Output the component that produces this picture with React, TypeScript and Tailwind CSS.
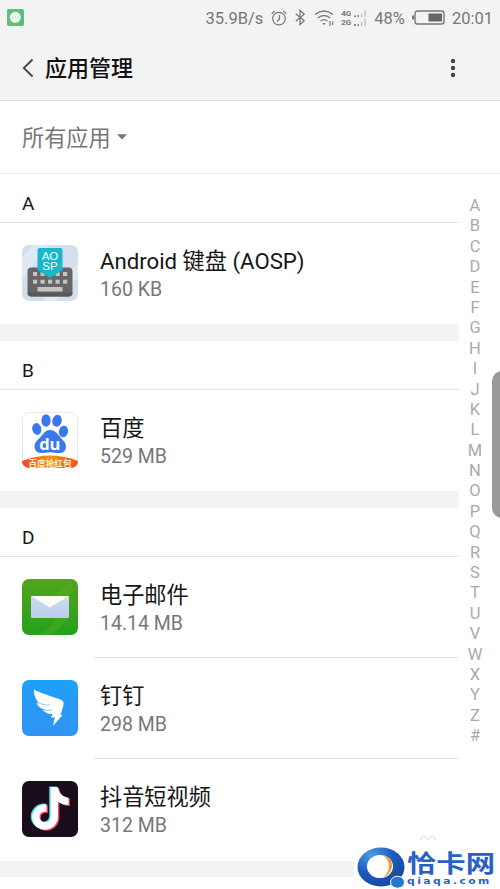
import type { ReactNode } from "react";

type AppItem = {
  name: string;
  size: string;
  icon: ReactNode;
};

const letters = "ABCDEFGHIJKLMNOPQRSTUVWXYZ#".split("");

function KeyboardIcon() {
  return (
    <svg viewBox="0 0 56 56" className="size-14">
      <rect width="56" height="56" rx="7" fill="#d3dfee" />
      <path d="M0 12 12 0h16L0 34ZM20 56 56 18v14L34 56Z" fill="#dfe8f4" />
      <rect x="5.5" y="22.5" width="45" height="29" rx="4" fill="#666" />
      <path d="M5.5 47.5q0 4 4 4h37q4 0 4-4" fill="#585858" />
      {[0, 1, 2, 3, 4].map((i) => (
        <g key={i} fill="#c4c4c4">
          <rect x={11 + i * 7.5} y="27" width="4.2" height="4" />
          <rect x={11 + i * 7.5} y="34.7" width="4.2" height="4" />
        </g>
      ))}
      <rect x="15.500" y="42" width="25" height="4.500" fill="#c4c4c4" />
      <path d="M17.500 3h21q2 0 2 2v20L28.300 33 15.500 25V5q0-2 2-2Z" fill="#18b8ca" />
      <g
        fill="#fff"
        fontFamily="Liberation Sans, sans-serif"
        fontSize="11.5"
        textAnchor="middle"
      >
        <text x="28" y="14.500">AO</text>
        <text x="28" y="25">SP</text>
      </g>
    </svg>
  );
}

function BaiduIcon() {
  return (
    <svg viewBox="0 0 56 56" className="size-14">
      <defs>
        <linearGradient id="ribbon">
          <stop offset="0" stopColor="#f0481c" />
          <stop offset=".5" stopColor="#f5911c" />
          <stop offset="1" stopColor="#f0501c" />
        </linearGradient>
        <clipPath id="baidu-clip">
          <rect width="56" height="56" rx="7" />
        </clipPath>
      </defs>
      <rect x=".5" y=".5" width="55" height="55" rx="7" fill="#fff" stroke="#e9e9e9" />
      <g fill="#3b78ee">
        <ellipse cx="14.800" cy="17" rx="4.500" ry="6" transform="rotate(-12 14.800 17)" />
        <ellipse cx="24" cy="8.500" rx="4.600" ry="6.200" />
        <ellipse cx="35" cy="8.800" rx="4.700" ry="6" transform="rotate(14 35 8.800)" />
        <ellipse cx="41.500" cy="19.500" rx="4.600" ry="5.800" transform="rotate(10 41.500 19.500)" />
        <path d="M28 18c-4.500 0-6.500 3.500-9 6.500-2.800 3.300-6.500 5.500-6.500 10 0 4 2.800 6.500 6.500 6.500 3.500 0 5.500-.8 9-.8s6 .8 9.500.8c4 0 6.500-2.500 6.500-6.500 0-4.500-3.500-6.500-6.200-10C35 21 32.500 18 28 18Z" />
      </g>
      <text
        x="27.800"
        y="37.500"
        fill="#fff"
        fontFamily="Open Sans, sans-serif"
        fontSize="16.500"
        fontWeight="700"
        textAnchor="middle"
      >
        du
      </text>
      <g clipPath="url(#baidu-clip)">
        <path d="M0 49Q28 38 56 49v7H0Z" fill="url(#ribbon)" />
        <text
          x="28"
          y="54.500"
          fill="#fff3d0"
          fontFamily="Noto Sans CJK SC, sans-serif"
          fontSize="8.600"
          fontWeight="700"
          textAnchor="middle"
        >
          百度抢红包
        </text>
      </g>
    </svg>
  );
}

function MailIcon() {
  return (
    <svg viewBox="0 0 56 56" className="size-14">
      <defs>
        <linearGradient id="mail-bg" x2="0" y2="1">
          <stop offset="0" stopColor="#54a31d" />
          <stop offset="1" stopColor="#25a11a" />
        </linearGradient>
        <linearGradient id="mail-body" x2="0" y2="1">
          <stop offset="0" stopColor="#cddaf0" />
          <stop offset="1" stopColor="#bccdec" />
        </linearGradient>
      </defs>
      <rect width="56" height="56" rx="7" fill="url(#mail-bg)" />
      <path d="M47 17Q52 9 50 3L47 4Q39 12 28 17ZM47 39 30 56H16Q27 50 36 39Z" fill="#5bb32c" opacity=".35" />
      <rect x="9" y="17" width="38" height="22" rx="1" fill="url(#mail-body)" />
      <path d="M9 17h38L28 28.500Z" fill="#fafcf0" />
    </svg>
  );
}

function DingTalkIcon() {
  return (
    <svg viewBox="0 0 56 56" className="size-14">
      <defs>
        <linearGradient id="ding-bg" x2="0" y2="1">
          <stop offset="0" stopColor="#1da1f8" />
          <stop offset="1" stopColor="#3293f4" />
        </linearGradient>
      </defs>
      <rect width="56" height="56" rx="7" fill="url(#ding-bg)" />
      <path
        d="M12 9.500c5 3 15 6 25 9.500 3.500 1.200 5.300 2.700 4.500 6-.8 3-1.800 6.500-3 10h2L31 46l1.800-8.500H29l1.500-3.500c-4 .3-7.800-1.200-9.900-4.200 1 .3 2.500.3 3.700.1-4.800-.6-8.300-3-9.800-7.100 1 .5 2 .8 3 .9C14 20 11.500 15 12 9.500Z"
        fill="#fff"
      />
      <path d="M17 23c3.500 1.700 7.500 2.300 11 1.800M22 30c3 .8 6 .6 8.500-.2" fill="none" stroke="#2a9bf7" strokeWidth=".5" />
    </svg>
  );
}

const notePath =
  "M28 6h7.500c.5 6 4.500 10 10.500 10.500v7.300c-4 0-7.500-1.300-10.500-3.300V35c0 8-6 13.500-13 13.500S9.500 43 9.500 36s6-13.500 14.500-13v7.800c-4-.8-7 1.500-7 5 0 3.200 2.500 5.200 5.500 5.200s5.500-2.300 5.500-6Z";

function DouyinIcon() {
  return (
    <svg viewBox="0 0 56 56" className="size-14">
      <rect width="56" height="56" rx="7" fill="#190d1c" />
      <path d={notePath} fill="#ef3b58" transform="translate(1.900 1.200)" />
      <path d={notePath} fill="#45ddda" transform="translate(-.8 -.4)" />
      <path d={notePath} fill="#fff" transform="translate(.6 .2)" />
    </svg>
  );
}

const sections: { letter: string; items: AppItem[] }[] = [
  {
    letter: "A",
    items: [{ name: "Android 键盘 (AOSP)", size: "160 KB", icon: <KeyboardIcon /> }],
  },
  {
    letter: "B",
    items: [{ name: "百度", size: "529 MB", icon: <BaiduIcon /> }],
  },
  {
    letter: "D",
    items: [
      { name: "电子邮件", size: "14.14 MB", icon: <MailIcon /> },
      { name: "钉钉", size: "298 MB", icon: <DingTalkIcon /> },
      { name: "抖音短视频", size: "312 MB", icon: <DouyinIcon /> },
    ],
  },
];

function StatusBar() {
  return (
    <div className="flex h-9 items-center pl-[7px] pr-[7px] pt-[2px] text-[16.5px] text-[#777]">
      <svg viewBox="0 0 17 17" className="mb-[3px] size-[17px]">
        <rect width="17" height="17" rx="2" fill="#5dbd7c" />
        <circle cx="8.300" cy="8.300" r="5.500" fill="#eafaf0" />
        <path d="M5.500 8.300h1m1.200 0h1m1.200 0h1" stroke="#8ccfa3" />
      </svg>
      <span className="ml-auto">35.9B/s</span>

      <svg viewBox="0 0 16 16" className="mb-[3px] ml-[8px] size-4" fill="none" stroke="currentColor" strokeWidth="1.200">
        <circle cx="8" cy="8.600" r="6.300" />
        <path d="M8.500 4.800v4.200L6 11.500M.7 3.700 3.700 1M12.300 1l3 2.700" />
      </svg>
      <svg viewBox="0 0 12 18" className="mb-[3px] ml-[7px] h-[17px] w-3" fill="none" stroke="currentColor" strokeWidth="1.300">
        <path d="m1.500 5 9 7.500L6 16.500v-15l4.500 4-9 7.500" />
      </svg>
      <svg viewBox="0 0 22 18" className="mb-[3px] ml-[8px] h-[18px] w-[22px]" fill="none" stroke="currentColor" strokeWidth="1.400">
        <path d="M1 5.500q9-7 18 0M3.800 9q6.200-5 12.400 0M6.500 12q3.500-2.800 7 0" />
        <path d="M8.300 14h3.400L10 16.300Z" fill="currentColor" stroke="none" />
        <path d="M16 12v5M18.700 12.500v3.500" strokeWidth="1.200" />
      </svg>
      <div className="mb-[3px] ml-[5px] flex w-[11px] flex-col text-[8px] font-bold leading-[9px]">
        <span>4G</span>
        <span>2G</span>
      </div>
      <svg viewBox="0 0 14 18" className="mb-[3px] ml-px h-[18px] w-[14px]">
        <path d="M1 6.500h2v1.500H1ZM4.500 6h1.500v2H4.500ZM1 15h2v2H1ZM4.500 15h1.500v2H4.500Z" fill="#888" />
        <path d="M8 4.500h1.200V8H8ZM11.500 1h1.200v7h-1.200ZM8 13h1.200v4H8ZM11.500 9.500h1.200V17h-1.200Z" fill="#bbb" />
      </svg>
      <span className="ml-[7px]">48%</span>
      <svg viewBox="0 0 33 15" className="mb-[3px] ml-[7px] h-[15px] w-[33px]">
        <rect x="3" y="1" width="29" height="13" rx="2.500" fill="none" stroke="#777" strokeWidth="1.400" />
        <path d="M0 5.500h2v4H0Z" fill="#777" />
        <path d="M16.500 3.500H30v8H16.500Z" fill="#666" />
      </svg>
      <span className="ml-[7px]">20:01</span>
    </div>
  );
}

function AppRow({ item, last }: { item: AppItem; last: boolean }) {
  return (
    <div className="flex h-[101.2px] pl-[22px]">
      <div className="mt-[22px] size-14 shrink-0">{item.icon}</div>
      <div className={`ml-4 flex-1 pl-[6px] pt-[23px] ${last ? "" : "border-b border-[#e3e3e3]"}`}>
        <div className="h-[31px] whitespace-nowrap text-[22.2px] leading-[31px] text-[#161616]">{item.name}</div>
        <div className="text-[19.5px] leading-[26px] text-[#777]">{item.size}</div>
      </div>
    </div>
  );
}

function Watermark() {
  return (
    <div className="absolute bottom-0 right-0 flex h-[43px] w-[146px] items-start bg-white">
      <svg viewBox="0 0 50 42" className="ml-[3px] mt-px h-[42px] w-[50px] shrink-0">
        <defs>
          <radialGradient id="brand" cx=".3" cy=".2" r=".9">
            <stop offset="0" stopColor="#4b9be8" />
            <stop offset=".5" stopColor="#1e5cbc" />
            <stop offset="1" stopColor="#1543a0" />
          </radialGradient>
        </defs>
        <ellipse cx="24" cy="20" rx="23.500" ry="19.500" fill="url(#brand)" />
        <ellipse cx="23" cy="19.500" rx="13" ry="11.500" fill="#fff" />
        <path d="M25 8q11 3 10 12-2 8-9 10 6-4 6-11 0-7-7-11Z" fill="#f29a21" />
        <ellipse cx="40.500" cy="35.200" rx="7" ry="6" fill="#227ad0" stroke="#fff" />
      </svg>
      <div className="flex flex-1 flex-col text-[#2a5fc6]">
        <div className="mt-[3px] h-[27px] w-[72px] origin-left scale-x-[1.25] whitespace-nowrap font-['Noto_Sans_CJK_SC',sans-serif] text-[23.5px] font-bold leading-[26px]">
          恰卡网
        </div>
        <div className="h-[11px] origin-left scale-x-[1.35] whitespace-nowrap font-['DejaVu_Sans',sans-serif] text-[8px] font-bold leading-[11px] tracking-[1.8px]">
          qiaqa.com
        </div>
      </div>
    </div>
  );
}

export default function App() {
  return (
    <div className="relative h-[889px] w-[500px] overflow-hidden bg-white font-[Roboto,'Noto_Sans_CJK_SC',sans-serif]">
      <header className="h-[101px] border-b border-[#dcdcdc] bg-[#f3f3f3]">
        <StatusBar />
        <div className="flex h-16 items-center pl-[22px] pr-[44px]">
          <svg viewBox="0 0 12 20" className="h-5 w-3" fill="none" stroke="#444" strokeWidth="1.800">
            <path d="M10.500 1.500 1.800 10l8.700 8.500" />
          </svg>
          <h1 className="ml-[11px] text-[22px] font-medium text-[#111]">应用管理</h1>
          <svg viewBox="0 0 6 20" className="ml-auto h-5 w-[6px]" fill="#444">
            <circle cx="3" cy="3" r="2.200" />
            <circle cx="3" cy="10" r="2.200" />
            <circle cx="3" cy="17" r="2.200" />
          </svg>
        </div>
      </header>

      <div className="flex h-[73px] items-center border-b border-[#ececec] pl-[22px] text-[22.2px] text-[#777]">
        <span className="pt-[3px]">所有应用</span>
        <svg viewBox="0 0 10 6" className="ml-[6px] h-[6px] w-[10px]">
          <path d="M0 .3h10L5 5.500Z" fill="#777" />
        </svg>
      </div>

      <div className="flex">
        <main className="w-[459px] shrink-0">
          {sections.map((section) => (
            <section key={section.letter}>
              <h2 className="flex h-[49.3px] items-center border-b border-[#e3e3e3] pl-[22px] pt-[12px] text-[19px] text-[#161616]">
                {section.letter}
              </h2>
              {section.items.map((item, i) => (
                <AppRow key={item.name} item={item} last={i === section.items.length - 1} />
              ))}
              <div className="h-[16.4px] bg-[#f3f3f3]" />
            </section>
          ))}
        </main>
        <nav className="flex w-8 flex-col items-center pt-[22px] text-[16.5px] text-[#aaa]">
          {letters.map((letter) => (
            <span key={letter} className="h-[20.4px] leading-[20.4px]">
              {letter}
            </span>
          ))}
        </nav>
      </div>

      <div className="absolute -right-3 top-[371px] h-[147px] w-5 rounded-[10px] bg-[#999]" />
      <svg viewBox="0 0 18 7" className="absolute left-[419px] top-[834px] h-[7px] w-[18px]" fill="none" stroke="#ddd">
        <path d="M1 6q4-8 8 0 4-8 8 0" />
      </svg>
      <Watermark />
    </div>
  );
}
